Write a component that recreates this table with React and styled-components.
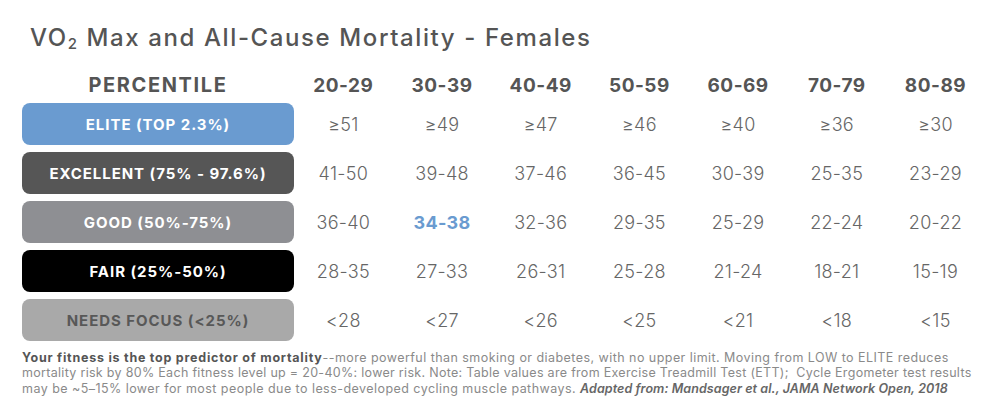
import React from 'react';
import styled, { createGlobalStyle } from 'styled-components';

const GlobalStyle = createGlobalStyle`
  html, body {
    margin: 0;
    padding: 0;
    background: #ffffff;
  }
  body {
    font-family: Inter, 'DejaVu Sans', sans-serif;
    color: #555555;
  }
`;

const Page = styled.main`
  width: 996px;
  height: 417px;
  box-sizing: border-box;
  padding: 24px 11px 0 22px;
  overflow: hidden;
`;

const Title = styled.h1`
  margin: 0 0 0 8px;
  font-size: 24px;
  line-height: 28px;
  font-weight: 500;
  color: #555555;
  letter-spacing: 1.6px;
  white-space: nowrap;

  sub {
    font-size: 15px;
    vertical-align: -3px;
    line-height: 0;
  }
`;

const Table = styled.div`
  display: grid;
  grid-template-columns: 272px repeat(7, 98.7px);
  grid-template-rows: 29px repeat(5, 42px);
  row-gap: 7px;
  margin-top: 15px;
`;

const HeaderCell = styled.div`
  display: flex;
  align-items: center;
  justify-content: center;
  padding-top: 7px;
  font-size: ${(p) => (p.$wide ? '20px' : '19px')};
  letter-spacing: ${(p) => (p.$wide ? '1.6px' : '0.5px')};
  font-weight: 700;
  color: #555555;
`;

const labelColors = {
  elite: { bg: '#6a9bd0', fg: '#ffffff' },
  excellent: { bg: '#565656', fg: '#ffffff' },
  good: { bg: '#8e8f93', fg: '#ffffff' },
  fair: { bg: '#000000', fg: '#ffffff' },
  focus: { bg: '#a9a9a9', fg: '#585858' },
};

const Label = styled.div`
  display: flex;
  align-items: center;
  justify-content: center;
  border-radius: 8px;
  background: ${(p) => labelColors[p.$level].bg};
  color: ${(p) => labelColors[p.$level].fg};
  font-size: 15px;
  font-weight: 700;
  letter-spacing: 0.95px;
  white-space: nowrap;
`;

const Value = styled.div`
  display: flex;
  align-items: center;
  justify-content: center;
  font-size: 18px;
  letter-spacing: 0.3px;
  font-weight: ${(p) => (p.$highlight ? 700 : 300)};
  color: ${(p) => (p.$highlight ? '#6a9bd0' : '#666666')};
`;

const Note = styled.div`
  margin: 9px 0 0;
  font-size: 12.5px;
  line-height: 15.3px;
  color: #8a8a8a;
  white-space: nowrap;

  strong {
    color: #555555;
    font-weight: 700;
    letter-spacing: 0.76px;
  }

  em {
    color: #666666;
    font-weight: 600;
    letter-spacing: 0.08px;
  }
`;

const NoteLine = styled.div`
  letter-spacing: ${(p) => p.$spacing || '0.45px'};
`;

const ages = ['20-29', '30-39', '40-49', '50-59', '60-69', '70-79', '80-89'];

const rows = [
  { level: 'elite', label: 'ELITE (TOP 2.3%)', values: ['≥51', '≥49', '≥47', '≥46', '≥40', '≥36', '≥30'] },
  { level: 'excellent', label: 'EXCELLENT (75% - 97.6%)', values: ['41-50', '39-48', '37-46', '36-45', '30-39', '25-35', '23-29'] },
  { level: 'good', label: 'GOOD (50%-75%)', values: ['36-40', '34-38', '32-36', '29-35', '25-29', '22-24', '20-22'], highlight: 1 },
  { level: 'fair', label: 'FAIR (25%-50%)', values: ['28-35', '27-33', '26-31', '25-28', '21-24', '18-21', '15-19'] },
  { level: 'focus', label: 'NEEDS FOCUS (<25%)', values: ['<28', '<27', '<26', '<25', '<21', '<18', '<15'] },
];

const App = () => (
  <>
    <GlobalStyle />
    <Page>
      <Title>
        VO<sub>2</sub> Max and All-Cause Mortality - Females
      </Title>
      <Table>
        <HeaderCell $wide>PERCENTILE</HeaderCell>
        {ages.map((a) => (
          <HeaderCell key={a}>{a}</HeaderCell>
        ))}
        {rows.map((r) => (
          <React.Fragment key={r.level}>
            <Label $level={r.level}>{r.label}</Label>
            {r.values.map((v, i) => (
              <Value key={i} $highlight={r.highlight === i}>
                {v}
              </Value>
            ))}
          </React.Fragment>
        ))}
      </Table>
      <Note>
        <NoteLine>
          <strong>Your fitness is the top predictor of mortality</strong>--more
          powerful than smoking or diabetes, with no upper limit. Moving from
          LOW to ELITE reduces
        </NoteLine>
        <NoteLine $spacing="0.3px">
          mortality risk by 80% Each fitness level up = 20-40%: lower risk.
          Note: Table values are from Exercise Treadmill Test (ETT);&nbsp; Cycle
          Ergometer test results
        </NoteLine>
        <NoteLine>
          may be ~5–15% lower for most people due to less-developed cycling
          muscle pathways.{' '}
          <em>Adapted from: Mandsager et al., JAMA Network Open, 2018</em>
        </NoteLine>
      </Note>
    </Page>
  </>
);

export default App;
